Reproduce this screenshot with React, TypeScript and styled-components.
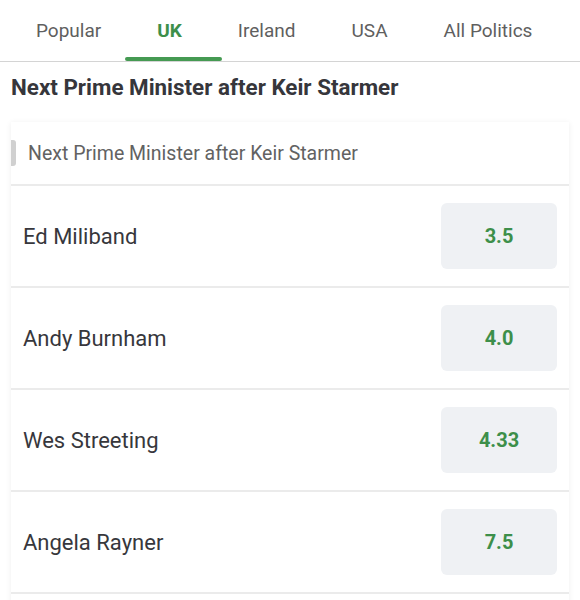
import * as React from "react";
import styled, { createGlobalStyle } from "styled-components";

const GlobalStyle = createGlobalStyle`
  body {
    margin: 0;
    background: #ffffff;
    font-family: Roboto, "Noto Sans", sans-serif;
  }
`;

const Page = styled.div`
  width: 580px;
  height: 600px;
  overflow: hidden;
  background: #fff;
`;

const TabBar = styled.nav`
  display: flex;
  height: 62px;
  padding-left: 8px;
  border-bottom: 1px solid #d4d4d4;
  box-sizing: border-box;
`;

const Tab = styled.div<{ $active?: boolean }>`
  position: relative;
  display: flex;
  align-items: center;
  padding: 0 28px;
  font-size: 19px;
  color: ${(p) => (p.$active ? "#3d8f4a" : "#5f5f5f")};
  font-weight: ${(p) => (p.$active ? 700 : 400)};

  &::after {
    content: "";
    display: ${(p) => (p.$active ? "block" : "none")};
    position: absolute;
    left: -4px;
    right: -12px;
    bottom: 0;
    height: 4px;
    border-radius: 2px;
    background: #459a52;
  }
`;

const Title = styled.h2`
  margin: 0;
  padding: 12px 11px 0;
  height: 60px;
  box-sizing: border-box;
  font-size: 22.4px;
  font-weight: 700;
  color: #36363b;
`;

const Card = styled.section`
  margin: 0 11px;
  padding-bottom: 30px;
  background: #fff;
  box-shadow: 0 1px 6px rgba(0, 0, 0, 0.07);
`;

const CardHeader = styled.div`
  display: flex;
  align-items: center;
  height: 62px;
  border-bottom: 2px solid #ebebeb;
  font-size: 19.5px;
  color: #626262;
`;

const Pill = styled.span`
  width: 5px;
  height: 26px;
  margin-right: 12px;
  border-radius: 0 3px 3px 0;
  background: #d0d0d0;
`;

const Row = styled.div`
  display: flex;
  align-items: center;
  justify-content: space-between;
  height: 102px;
  padding: 0 12px;
  border-bottom: 2px solid #ebebeb;
  box-sizing: border-box;
`;

const Name = styled.span`
  font-size: 22px;
  color: #37373c;
`;

const Odds = styled.button`
  width: 116px;
  height: 66px;
  border: 0;
  border-radius: 6px;
  background: #eff1f4;
  color: #3d8f4a;
  font-family: Roboto, sans-serif;
  font-size: 20px;
  font-weight: 700;
`;

const tabs = ["Popular", "UK", "Ireland", "USA", "All Politics"];

const runners = [
  { name: "Ed Miliband", price: "3.5" },
  { name: "Andy Burnham", price: "4.0" },
  { name: "Wes Streeting", price: "4.33" },
  { name: "Angela Rayner", price: "7.5" },
];

const App = () => (
  <Page>
    <GlobalStyle />
    <TabBar>
      {tabs.map((t) => (
        <Tab key={t} $active={t === "UK"}>
          {t}
        </Tab>
      ))}
    </TabBar>
    <Title>Next Prime Minister after Keir Starmer</Title>
    <Card>
      <CardHeader>
        <Pill />
        Next Prime Minister after Keir Starmer
      </CardHeader>
      {runners.map((r) => (
        <Row key={r.name}>
          <Name>{r.name}</Name>
          <Odds>{r.price}</Odds>
        </Row>
      ))}
    </Card>
  </Page>
);

export default App;
